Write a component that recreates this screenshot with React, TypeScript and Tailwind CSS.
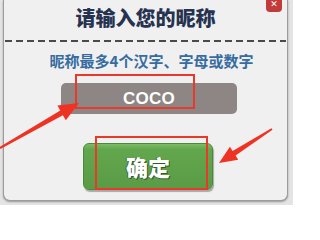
import React from "react";

export default function App() {
  const cjk = { fontFamily: '"Noto Sans CJK SC", "Noto Sans", sans-serif' };
  return (
    <div className="relative w-[293px] h-[205px] overflow-hidden bg-[#e4e4e4]">
      <div className="ml-[3px] w-[285px] h-[201px] flex flex-col bg-[#f0f0f0] border-l border-r border-b border-[#9c9c9c] rounded-b-[7px] shadow-[0_1px_2px_rgba(0,0,0,0.35)]">
        <div
          className="mt-[6px] h-[24px] leading-[24px] text-center text-[20px] font-black text-[#263350]"
          style={cjk}
        >
          请输入您的昵称
        </div>
        <div className="mt-[10px] mx-[1px] h-[2px] bg-[repeating-linear-gradient(90deg,#4a4a4a_0_7px,transparent_7px_11px)]" />
        <div
          className="mt-[10px] h-[18px] leading-[18px] pl-[12px] text-center text-[15px] font-bold text-[#376ca0]"
          style={cjk}
        >
          昵称最多4个汉字、字母或数字
        </div>
        <div className="mt-[13px] ml-[57px] w-[176px] h-[31px] rounded-[5px] bg-[#8d8684] flex items-center justify-center">
          <span
            className="text-[17px] font-bold text-white tracking-[0.3px]"
            style={{ fontFamily: '"Liberation Sans", Arial, sans-serif' }}
          >
            COCO
          </span>
        </div>
        <div className="mt-[29px] ml-[79px] w-[130px] h-[47px] rounded-[6px] border border-[#4c8a3b] bg-[linear-gradient(180deg,#7cbc63_0%,#62a64d_12%,#5a9c46_100%)] shadow-[1px_2px_1px_rgba(0,0,0,0.3)] flex items-center justify-center">
          <span
            className="text-[22px] font-black text-white [text-shadow:1px_1px_0_#2f5a24,-1px_0_0_#3d6e30]"
            style={cjk}
          >
            确定
          </span>
        </div>
      </div>

      {/* close button */}
      <div className="absolute top-0 left-[266px] w-[16px] h-[12px] rounded-b-[4px] bg-[#c23a3a] flex items-start justify-center">
        <span className="text-[9px] leading-[9px] font-bold text-white" style={{ fontFamily: '"DejaVu Sans", sans-serif' }}>
          ✕
        </span>
      </div>

      {/* red annotation rectangles */}
      <div className="absolute left-[75px] top-[74px] w-[120px] h-[35px] border-2 border-[#e8392b]" />
      <div className="absolute left-[95px] top-[136px] w-[113px] h-[54px] border-2 border-[#e8392b]" />

      {/* arrows */}
      <svg className="absolute left-0 top-0" width="293" height="205" viewBox="0 0 293 205">
        <polygon
          fill="#ee3324"
          points="0.4,149 62.9,115.3 65.8,120.2 79,103 57.4,105.6 60.3,110.5 -0.4,147"
        />
        <polygon
          fill="#ee3324"
          points="272.5,129.8 235.6,155.6 238.2,159.8 219,163 229.9,146.8 232.6,151 271.5,128.2"
        />
      </svg>
    </div>
  );
}
